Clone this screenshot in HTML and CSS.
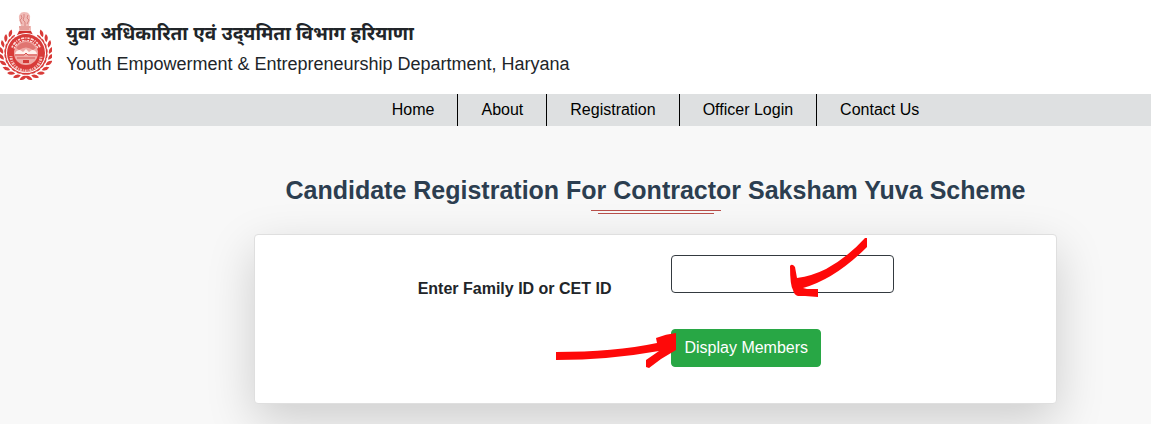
FILE: index.html
```html
<!DOCTYPE html>
<html lang="en">
<head>
    <meta charset="UTF-8">
    <meta name="viewport" content="width=device-width, initial-scale=1.0">
    <title>Candidate Registration</title>
    <link rel="stylesheet" href="styles.css">
</head>
<body>
    <header class="header">
        <svg class="emblem" viewBox="0 0 52 68" role="img" aria-label="Government of Haryana">
            <defs>
                <path id="leaf" d="M-5-27q5-1 7 4q-5 1-7-4zM-4-21q4-2 7 1q-4 3-7-1z"/>
            </defs>
            <!-- lion capital -->
            <path d="M20 2q1-2 4-2q4 0 5 2q2 2 1 5l-1 7h2v5h-12v-5h2l-2-7q-1-3 1-5z" fill="#f0bbb7"/>
            <path d="M21 3l1 3l-2 2l2 4M28 3l-1 3l2 2l-2 4M24 2v3l-1 3l2 2v4M19 15h11M20 17h9" fill="none" stroke="#d98480" stroke-width="1"/>
            <path d="M19 19h12l2 4h-16z" fill="#d0302e"/>
            <!-- wreath -->
            <g transform="translate(26 41)" fill="#d93b38">
                <g id="branch">
                    <use href="#leaf" transform="rotate(42)"/>
                    <use href="#leaf" transform="rotate(57)"/>
                    <use href="#leaf" transform="rotate(72)"/>
                    <use href="#leaf" transform="rotate(87)"/>
                    <use href="#leaf" transform="rotate(102)"/>
                    <use href="#leaf" transform="rotate(117)"/>
                    <use href="#leaf" transform="rotate(132)"/>
                    <use href="#leaf" transform="rotate(147)"/>
                    <use href="#leaf" transform="rotate(162)"/>
                    <use href="#leaf" transform="rotate(177)"/>
                </g>
                <use href="#branch" transform="scale(-1 1)"/>
            </g>
            <circle cx="26" cy="41" r="20" fill="#fff"/>
            <circle cx="26" cy="41" r="19" fill="#d83b39"/>
            <!-- ring with the lettering worn down to ticks -->
            <path d="M13 36a14 14 0 0 1 26 0" fill="none" stroke="#fbdcd9" stroke-width="4" stroke-dasharray="2 1 3 1 1 1"/>
            <path d="M13 36a14 14 0 0 1 26 0" fill="none" stroke="#d83b39" stroke-width="1"/>
            <path d="M11 44a15 15 0 0 0 30 0" fill="none" stroke="#f4bdb9" stroke-width="3" stroke-dasharray="1 1 2 1"/>
            <!-- sun, lotus and water -->
            <circle cx="26" cy="41" r="12" fill="#f0aaa6"/>
            <path d="M16 36q4-6 10-6t10 6l-3 2q-7-5-14 0z" fill="#e07571"/>
            <path d="M15 42q1-4 5-4l3 2l3-3l3 3l3-2q4 0 5 4z" fill="#fff1ee"/>
            <path d="M15 43h9l2-2l2 2h9M17 46h18" stroke="#d65350" stroke-width="1" fill="none"/>
            <path d="M23 48h6v3h-6z" fill="#d33a37"/>
        </svg>
        <div class="department">
            <p class="name-hindi" lang="hi">युवा अधिकारिता एवं उद्&zwnj;यमिता विभाग हरियाणा</p>
            <p class="name-english">Youth Empowerment &amp; Entrepreneurship Department, Haryana</p>
        </div>
    </header>

    <nav class="navbar">
        <a href="#">Home</a>
        <a href="#">About</a>
        <a href="#">Registration</a>
        <a href="#">Officer Login</a>
        <a href="#">Contact Us</a>
    </nav>

    <main class="content">
        <h1 class="title">Candidate Registration For Contractor Saksham Yuva Scheme</h1>
        <div class="title-lines"></div>

        <form class="card">
            <label for="familyId">Enter Family ID or CET ID</label>
            <div class="field">
                <input type="text" id="familyId">
                <svg class="arrow arrow-input" viewBox="0 0 78 60" aria-hidden="true">
                    <path d="M75 0h2v9Q45 41 13 50L17 51H28V59L15 58H8Q4 57 3 52Q0 47 0 28Q2 25 5 29L7 40Q22 38 36 31Q58 19 75 0z"/>
                </svg>
            </div>
            <div class="field field-button">
                <button type="button">Display Members</button>
                <svg class="arrow arrow-button" viewBox="0 0 121 36" aria-hidden="true">
                    <path d="M0 19Q58 19 101 10L100 5Q110 1 120 0V17L105 26L93 35L90 34V27L103 18Q53 27 0 27z"/>
                </svg>
            </div>
        </form>
    </main>
</body>
</html>
```
FILE: styles.css
```css
* {
    box-sizing: border-box;
}
body {
    margin: 0;
    min-height: 100vh;
    background-color: #f8f8f8;
    color: #212529;
    font-family: "Liberation Sans", Arial, sans-serif;
    font-size: 16px;
    line-height: 24px;
    overflow: hidden;
}
.header {
    display: flex;
    gap: 14px;
    padding: 12px 0 14px;
    background-color: #fff;
}
.emblem {
    width: 52px;
    height: 68px;
}
.department {
    padding-top: 7px;
}
.department p {
    margin: 0;
    line-height: 30px;
}
.name-hindi {
    font-family: "Liberation Sans", "Noto Sans Devanagari", "Noto Sans", sans-serif;
    font-size: 19px;
    font-weight: bold;
}
.name-english {
    font-size: 18px;
}
.navbar {
    display: flex;
    justify-content: center;
    padding-left: 160px;
    background-color: #dee0e1;
}
.navbar a {
    padding: 4px 23px;
    border-right: 1px solid #000;
    color: #000;
    text-decoration: none;
}
.navbar a:last-child {
    border-right: 0;
}
.content {
    padding: 48px 0 32px 160px;
}
.title {
    margin: 0;
    color: #2c3e50;
    font-size: 25px;
    line-height: 32px;
    text-align: center;
}
.title-lines {
    width: 130px;
    height: 4px;
    margin: 4px auto 20px;
    border-top: 1px solid #b9504b;
}
.title-lines::after {
    content: "";
    display: block;
    margin: 2px 7px 0;
    border-top: 1px solid #b9504b;
}
.card {
    display: grid;
    grid-template-columns: 1fr 1fr;
    column-gap: 32px;
    row-gap: 28px;
    width: 81%;
    margin: 0 auto;
    padding: 20px 0 36px;
    border: 1px solid #dfdfdf;
    border-radius: 4px;
    background-color: #fff;
    box-shadow: 0 16px 48px rgba(0, 0, 0, 0.175);
}
.card label {
    justify-self: end;
    padding: 22px 28px 0 0;
    font-weight: bold;
}
.field {
    position: relative;
    height: 38px;
}
.field-button {
    grid-column: 2;
}
.field input {
    width: 223px;
    height: 38px;
    padding: 6px 12px;
    border: 1px solid #343a40;
    border-radius: 4px;
    font: inherit;
}
.field button {
    height: 38px;
    padding: 6px 12px;
    border: 1px solid #28a745;
    border-radius: 4px;
    background-color: #28a745;
    color: #fff;
    font: inherit;
}
/* hand drawn pointers lying over the form */
.arrow {
    position: absolute;
    fill: #fe0909;
    pointer-events: none;
}
.arrow-input {
    top: -17px;
    left: 119px;
    width: 78px;
    height: 60px;
}
.arrow-button {
    top: 4px;
    left: -115px;
    width: 121px;
    height: 36px;
}
```
